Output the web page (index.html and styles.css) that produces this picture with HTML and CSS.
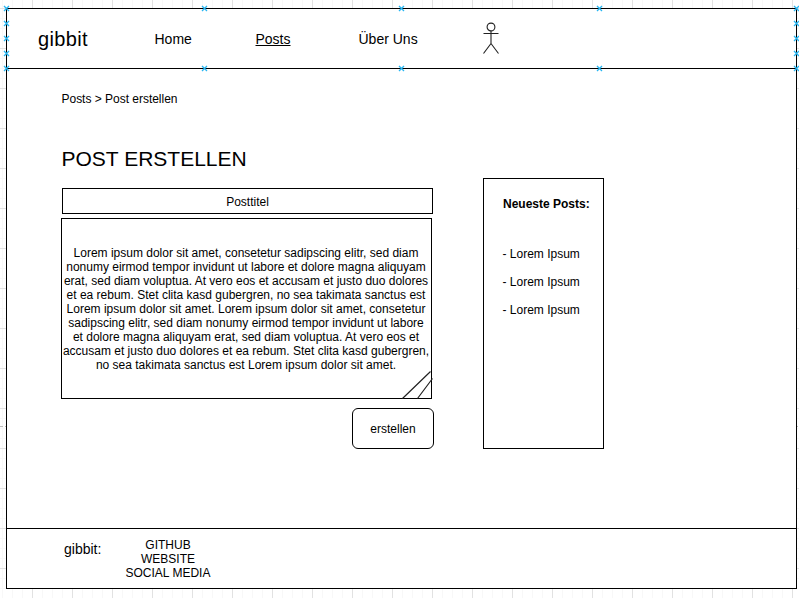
FILE: index.html
```
<!DOCTYPE html>
<html lang="de">
<head>
<meta charset="utf-8">
<title>gibbit – Post erstellen</title>
<link rel="stylesheet" href="styles.css">
</head>
<body>
<div class="page">
  <header class="header">
    <span class="logo">gibbit</span>
    <nav class="nav">
      <a class="home">Home</a>
      <a class="posts">Posts</a>
      <a class="about">Über Uns</a>
    </nav>
    <svg class="user" width="17" height="33" viewBox="0 0 17 33" fill="none" stroke="#222" stroke-width="1.1">
      <circle cx="9" cy="5" r="3.900"/>
      <path d="M9 9V21.500M1.500 11.500H16.500M9 21.500L1.500 31.500M9 21.500L16.500 31.500"/>
    </svg>
    <svg class="handles" width="799" height="72" viewBox="0 0 799 72">
      <defs><path id="x" d="M-2 -2L3 3M3 -2L-2 3" fill="none" stroke="#29b6f2" stroke-width="1.3"/></defs>
      <use href="#x" x="6" y="8"/><use href="#x" x="204" y="8"/><use href="#x" x="401" y="8"/><use href="#x" x="599" y="8"/><use href="#x" x="796" y="8"/>
      <use href="#x" x="6" y="23"/><use href="#x" x="6" y="38"/><use href="#x" x="6" y="53"/>
      <use href="#x" x="796" y="23"/><use href="#x" x="796" y="38"/><use href="#x" x="796" y="53"/>
      <use href="#x" x="6" y="68"/><use href="#x" x="204" y="68"/><use href="#x" x="401" y="68"/><use href="#x" x="599" y="68"/><use href="#x" x="796" y="68"/>
    </svg>
  </header>
  <main class="main">
    <section class="editor">
      <div class="crumbs">Posts &gt; Post erstellen</div>
      <h1 class="title">POST ERSTELLEN</h1>
      <div class="field">Posttitel</div>
      <div class="body">
        <p>Lorem ipsum dolor sit amet, consetetur sadipscing elitr, sed diam<br>nonumy eirmod tempor invidunt ut labore et dolore magna aliquyam<br>erat, sed diam voluptua. At vero eos et accusam et justo duo dolores<br>et ea rebum. Stet clita kasd gubergren, no sea takimata sanctus est<br>Lorem ipsum dolor sit amet. Lorem ipsum dolor sit amet, consetetur<br>sadipscing elitr, sed diam nonumy eirmod tempor invidunt ut labore<br>et dolore magna aliquyam erat, sed diam voluptua. At vero eos et<br>accusam et justo duo dolores et ea rebum. Stet clita kasd gubergren,<br>no sea takimata sanctus est Lorem ipsum dolor sit amet.</p>
        <svg class="grip" width="31" height="28" viewBox="0 0 31 28" fill="none" stroke="#222" stroke-width="1.2">
          <path d="M.500 27.500L28.500 .500M15.500 27.500L30.500 7.500"/>
        </svg>
      </div>
      <button class="submit">erstellen</button>
    </section>
    <aside class="latest">
      <h2>Neueste Posts:</h2>
      <div>- Lorem Ipsum</div>
      <div>- Lorem Ipsum</div>
      <div>- Lorem Ipsum</div>
    </aside>
  </main>
  <footer class="footer">
    <span class="brand">gibbit:</span>
    <div class="links">GITHUB<br>WEBSITE<br>SOCIAL MEDIA</div>
  </footer>
</div>
</body>
</html>
```
FILE: styles.css
```
* { box-sizing: border-box; }
body {
  margin: 0;
  height: 598px;
  padding: 8px 0 0 6px;
  overflow: hidden;
  font: 12px/14px "Liberation Sans", Arial, sans-serif;
  color: #000;
  background-color: #fff;
  /* page break mark, then major and minor grid lines */
  background-image:
    linear-gradient(90deg, #bbb 3px, transparent 3px),
    linear-gradient(90deg, #e2e2e2 1px, transparent 1px),
    linear-gradient(#e2e2e2 1px, transparent 1px),
    linear-gradient(90deg, #f8f8f8 1px, transparent 1px),
    linear-gradient(#f8f8f8 1px, transparent 1px);
  background-size: 5px 1px, 40px 40px, 40px 40px, 10px 10px, 10px 10px;
  background-position: 0 426px, 32px 8px, 32px 8px, 2px 8px, 2px 8px;
  background-repeat: repeat-x, repeat, repeat, repeat, repeat;
}
.page {
  width: 791px;
  height: 581px;
  border: 1px solid #000;
  background: #fff;
  display: flex;
  flex-direction: column;
}
.header {
  height: 60px;
  flex: none;
  border-bottom: 1px solid #000;
  display: flex;
  align-items: center;
  padding-left: 31px;
}
.logo { width: 116.500px; font-size: 20px; line-height: 24px; letter-spacing: .35px; }
.nav { display: flex; width: 328px; font-size: 14px; line-height: 18px; padding-top: 1px; }
.home { width: 101px; }
.posts { width: 103px; text-decoration: underline; }
.user { margin: -1px 0 0 -.500px; }
.handles { position: absolute; left: 0; top: 0; }
.main { flex: 1; display: flex; padding-left: 54px; }
.editor { width: 373px; margin-right: 49px; }
.crumbs { margin-top: 23px; padding-left: .500px; letter-spacing: -.02px; }
.title { margin: 40px 0 0 .500px; font-size: 21px; line-height: 26px; font-weight: 400; white-space: nowrap; }
.field {
  width: 371px;
  height: 26px;
  margin: 16px 0 4px 1px;
  border: 1px solid #000;
  text-align: center;
  line-height: 26px;
}
.body {
  position: relative;
  width: 371px;
  height: 181px;
  border: 1px solid #000;
  padding: 27px 1px 0 0;
}
.body p { margin: 0; text-align: center; white-space: nowrap; }
.grip { position: absolute; right: -2px; bottom: -1px; }
.submit {
  display: block;
  width: 82px;
  height: 41px;
  margin: 9px 0 0 auto;
  padding: 0;
  border: 1px solid #000;
  border-radius: 6px;
  background: #fff;
  font: inherit;
  color: inherit;
}
.latest {
  width: 121px;
  height: 271px;
  margin-top: 109px;
  border: 1px solid #000;
  padding: 18px 0 0 18px;
}
.latest h2 { margin: 0 0 36px 1px; font-size: 12px; line-height: 14px; white-space: nowrap; }
.latest div { margin-bottom: 14px; padding-left: .500px; }
.footer {
  height: 60px;
  flex: none;
  border-top: 1px solid #000;
  display: flex;
  padding: 9px 0 0 57px;
}
.brand { width: 56px; font-size: 14px; line-height: 22px; }
.links { width: 96px; text-align: center; }
```
